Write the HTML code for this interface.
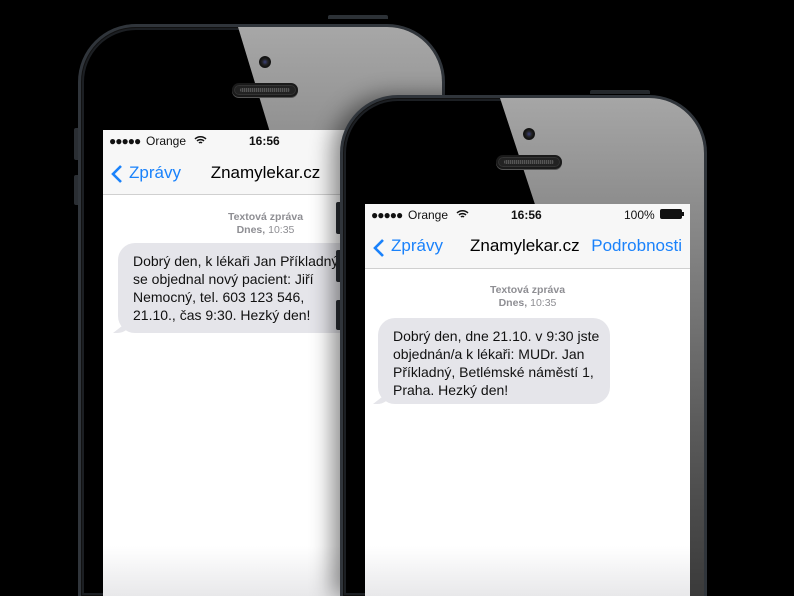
<!DOCTYPE html>
<html style="width:794px;height:596px;overflow:hidden"><head><meta charset="utf-8"><style>
*{margin:0;padding:0;box-sizing:border-box}
html,body{width:794px;height:596px;overflow:hidden;background:#000}
body{font-family:"Liberation Sans",Arial,sans-serif}
#wrap{position:relative;width:794px;height:596px;overflow:hidden;background:#000}
.phone{position:absolute;width:367px;border-radius:58px 58px 0 0;background:#000;border:3px solid #30353b;border-bottom:none;box-shadow:inset 0 0 0 1px #111,inset 0 0 0 3px #1c1f23;overflow:hidden}
.glare{position:absolute;left:0;top:0;width:100%;height:100%}
.btn{position:absolute;height:4px;width:60px;background:#2c3136;border-radius:2px 2px 0 0}
.side{position:absolute;width:4px;background:#2a2e33;border-radius:2px 0 0 2px}
.cam{position:absolute;width:12px;height:12px;border-radius:50%;background:radial-gradient(circle at 50% 50%,#3a3f7a 0,#222 35%,#111 60%,#333 100%)}
.spk{position:absolute;width:66px;height:14px;border-radius:7px;background:#222;border:2px solid #1a1a1a;box-shadow:0 1px 0 #555,inset 0 0 0 1px #333}
.spk:after{content:"";position:absolute;left:6px;right:6px;top:3px;bottom:3px;border-radius:3px;background:repeating-linear-gradient(90deg,#555 0 1px,#333 1px 2px)}
.screen{position:absolute;width:325px;background:#fff;overflow:hidden}
.status{position:absolute;left:0;top:0;width:100%;height:22px;background:#f7f7f7;font-size:12px;color:#111}
.nav{position:absolute;left:0;top:22px;width:100%;height:43px;background:#f7f7f7;border-bottom:1px solid #d0d0d0;font-size:17px}
.blue{color:#1a82fb}
.ts{position:absolute;left:0;width:100%;text-align:center;font-size:10.5px;color:#8e8e93;line-height:13px}
.bub{position:absolute;background:#e5e5ea;border-radius:17px;font-size:14px;line-height:18px;color:#111;padding:9px 0 0 15px}
.bub:before{content:"";position:absolute;left:-5px;bottom:0;width:18px;height:14px;background:#e5e5ea;border-bottom-right-radius:14px 12px;clip-path:polygon(0 100%,100% 0,100% 100%)}
.fade{position:absolute;left:0;right:0;bottom:0;height:50px;background:linear-gradient(rgba(235,235,238,0),#e8e8ea)}
</style></head><body><div id="wrap">

<div class="btn" style="left:328px;top:15px"></div>
<div class="side" style="left:74px;top:128px;height:32px"></div>
<div class="side" style="left:74px;top:175px;height:30px"></div>
<div class="phone" style="left:78px;top:24px;height:572px">
  <div class="glare" style="background:linear-gradient(#a7a7a7,#8e8e8e 120px,#555 500px);clip-path:polygon(157px 0,400px 0,400px 800px,400px 800px)"></div>
  <div class="cam" style="left:178px;top:29px"></div>
  <div class="spk" style="left:151px;top:56px"></div>
  <div class="screen" style="left:22px;top:103px;height:466px">
    <div class="status"><span style="position:absolute;left:6px;top:4px;letter-spacing:-1px">●●●●●</span><span style="position:absolute;left:43px;top:4px">Orange</span>
      <svg style="position:absolute;left:91px;top:5px" width="13" height="10" viewBox="0 0 13 10"><path d="M1 4a8 8 0 0 1 11 0M3 6a5 5 0 0 1 7 0M5 8a2 2 0 0 1 3 0" stroke="#111" stroke-width="1.5" fill="none"/></svg>
      <span style="position:absolute;left:146px;top:4px;font-weight:bold">16:56</span></div>
    <div class="nav"><svg style="position:absolute;left:8px;top:12px" width="12" height="20" viewBox="0 0 12 20"><path d="M10 2L2 10l8 8" stroke="#1a82fb" stroke-width="2.6" fill="none"/></svg>
      <span class="blue" style="position:absolute;left:26px;top:11px">Zprávy</span><span style="position:absolute;left:0;width:100%;text-align:center;top:11px">Znamylekar.cz</span></div>
    <div class="ts" style="top:81px"><b>Textová zpráva</b><br><b>Dnes,</b> 10:35</div>
    <div class="bub" style="left:15px;top:113px;width:300px;height:90px">Dobrý den, k lékaři Jan Příkladný<br>se objednal nový pacient: Jiří<br>Nemocný, tel. 603 123 546,<br>21.10., čas 9:30. Hezký den!</div>
    <div class="fade"></div>
  </div>
</div>

<div class="btn" style="left:590px;top:90px"></div>
<div class="side" style="left:336px;top:202px;height:32px"></div>
<div class="side" style="left:336px;top:250px;height:32px"></div>
<div class="side" style="left:336px;top:300px;height:30px"></div>
<div class="phone" style="left:340px;top:95px;height:501px;box-shadow:-8px 0 22px rgba(0,0,0,.45),inset 0 0 0 1px #111,inset 0 0 0 3px #1c1f23">
  <div class="glare" style="background:linear-gradient(#a6a6a6,#8c8c8c 110px,#5a5a5a 330px,#3a3a3a 500px);clip-path:polygon(157px 0,400px 0,400px 800px,420px 800px)"></div>
  <div class="cam" style="left:180px;top:30px"></div>
  <div class="spk" style="left:153px;top:57px"></div>
  <div class="screen" style="left:22px;top:106px;height:392px">
    <div class="status"><span style="position:absolute;left:6px;top:4px;letter-spacing:-1px">●●●●●</span><span style="position:absolute;left:43px;top:4px">Orange</span>
      <svg style="position:absolute;left:91px;top:5px" width="13" height="10" viewBox="0 0 13 10"><path d="M1 4a8 8 0 0 1 11 0M3 6a5 5 0 0 1 7 0M5 8a2 2 0 0 1 3 0" stroke="#111" stroke-width="1.5" fill="none"/></svg>
      <span style="position:absolute;left:146px;top:4px;font-weight:bold">16:56</span>
      <span style="position:absolute;left:259px;top:4px">100%</span>
      <span style="position:absolute;left:295px;top:5px;width:22px;height:10px;background:#111;border-radius:2px"></span><span style="position:absolute;left:317px;top:8px;width:2px;height:4px;background:#111"></span></div>
    <div class="nav"><svg style="position:absolute;left:8px;top:12px" width="12" height="20" viewBox="0 0 12 20"><path d="M10 2L2 10l8 8" stroke="#1a82fb" stroke-width="2.6" fill="none"/></svg>
      <span class="blue" style="position:absolute;left:26px;top:10px">Zprávy</span><span style="position:absolute;left:105px;top:10px">Znamylekar.cz</span><span class="blue" style="position:absolute;right:8px;top:10px">Podrobnosti</span></div>
    <div class="ts" style="top:80px"><b>Textová zpráva</b><br><b>Dnes,</b> 10:35</div>
    <div class="bub" style="left:13px;top:114px;width:232px;height:86px">Dobrý den, dne 21.10. v 9:30 jste<br>objednán/a k lékaři: MUDr. Jan<br>Příkladný, Betlémské náměstí 1,<br>Praha. Hezký den!</div>
    <div class="fade"></div>
  </div>
</div>
</div></body></html>
